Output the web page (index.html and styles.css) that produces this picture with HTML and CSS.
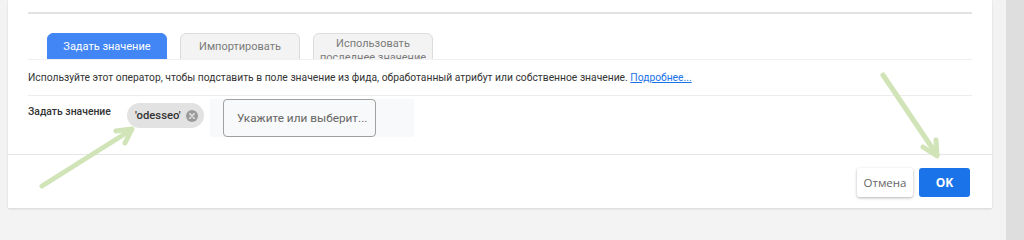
FILE: index.html
```html
<!DOCTYPE html>
<html lang="ru">
<head>
  <meta charset="UTF-8" />
  <meta name="viewport" content="width=device-width, initial-scale=1.0" />
  <title>Задать значение</title>
  <link rel="stylesheet" href="styles.css">
</head>
<body>
  <div class="dialog">
    <div class="dialog-body">
      <div class="top-rule"></div>

      <div class="tabs">
        <div class="tab tab-active">Задать значение</div>
        <div class="tab">Импортировать</div>
        <div class="tab tab-double">Использовать<br>последнее значение</div>
      </div>

      <div class="panel">
        <p class="desc">Используйте этот оператор, чтобы подставить в поле значение из фида, обработанный атрибут или собственное значение.&nbsp;<a href="#" class="more-link">Подробнее...</a></p>

        <div class="field-row">
          <div class="field-label">Задать значение</div>
          <div class="chip">
            <span class="chip-text">'odesseo'</span>
            <span class="chip-remove">
              <svg width="12" height="12" viewBox="0 0 12 12">
                <circle cx="6" cy="6" r="6" fill="#9b9b9b" />
                <path d="M3.8 3.8 L8.2 8.2 M8.2 3.8 L3.8 8.2" stroke="#e4e4e4" stroke-width="1.6" stroke-linecap="round" />
              </svg>
            </span>
          </div>
          <div class="input-wrap">
            <div class="input-box">Укажите или выберит...</div>
          </div>
        </div>
      </div>
    </div>

    <div class="dialog-footer">
      <button class="btn-cancel">Отмена</button>
      <button class="btn-ok">OK</button>
    </div>
  </div>

  <div class="gutter"></div>
  <div class="scrollbar"></div>

  <!-- annotation arrows over the screenshot -->
  <svg class="arrows" width="1024" height="240" viewBox="0 0 1024 240">
    <g stroke="#d0e4b7" stroke-width="5" stroke-linecap="round" stroke-linejoin="round" fill="none">
      <path d="M42 186 L131 130" />
      <path d="M116 131 L132 129 L125 143" />
      <path d="M883 75 L937 155" />
      <path d="M923 147 L937 156 L936 140" />
    </g>
  </svg>
</body>
</html>
```

FILE: styles.css
```css
body {
  margin: 0;
  padding: 0;
  background: #f3f3f3;
  font-family: Roboto, 'Liberation Sans', sans-serif;
  color: #333;
  display: flex;
  height: 240px;
  overflow: hidden;
}

.dialog {
  width: 984px;
  height: 208px;
  margin-left: 8px;
  background: #fff;
  box-shadow: 0 1px 2px rgba(0, 0, 0, 0.12);
  display: flex;
  flex-direction: column;
}

.dialog-body {
  flex: 1;
  padding: 0 20px;
}

.top-rule {
  height: 2px;
  margin-top: 12px;
  background: #e2e2e2;
}

.tabs {
  display: flex;
  gap: 13px;
  padding-left: 19px;
  margin-top: 19px;
  height: 26px;
  overflow: hidden;
}

.tab {
  width: 120px;
  height: 40px;
  box-sizing: border-box;
  padding-top: 6px;
  border: 1px solid #dcdcdc;
  border-radius: 6px 6px 0 0;
  background: #f3f3f3;
  color: #7b7b7b;
  font-size: 11px;
  line-height: 14px;
  text-align: center;
}

.tab-active {
  background: #4285f4;
  border-color: #4285f4;
  color: #fff;
}

.tab-double {
  padding-top: 3px;
}

.panel {
  border-top: 1px solid #f0f0f0;
}

.desc {
  margin: 0;
  height: 35px;
  display: flex;
  align-items: center;
  border-bottom: 1px solid #ececec;
  font-size: 10.3px;
  color: #333;
  white-space: nowrap;
}

.more-link {
  color: #1a73e8;
  text-decoration: underline;
}

.field-row {
  display: flex;
  align-items: flex-start;
  padding-top: 3px;
}

.field-label {
  width: 99px;
  margin-top: 6px;
  font-size: 10.4px;
  line-height: 13px;
  font-weight: 500;
  color: #333;
}

.chip {
  width: 77px;
  height: 25px;
  margin-top: 4px;
  box-sizing: border-box;
  padding: 0 6px 0 8px;
  border-radius: 13px;
  background: #e2e2e2;
  display: flex;
  align-items: center;
  justify-content: space-between;
}

.chip-text {
  font-size: 11.3px;
  font-weight: 500;
  color: #333;
}

.chip-remove {
  display: flex;
}

.input-wrap {
  margin-left: 6px;
  width: 204px;
  height: 38px;
  box-sizing: border-box;
  padding-left: 13px;
  background: #f8f9fa;
}

.input-box {
  width: 153px;
  height: 38px;
  box-sizing: border-box;
  border: 1px solid #a0a0a0;
  border-radius: 4px;
  background: #f8f9fa;
  padding-left: 13px;
  display: flex;
  align-items: center;
  font-size: 11.8px;
  color: #666;
  white-space: nowrap;
}

.dialog-footer {
  height: 54px;
  border-top: 1px solid #e6e6e6;
  display: flex;
  justify-content: flex-end;
  align-items: flex-start;
  gap: 6px;
  padding: 13px 22px 0 0;
  box-sizing: border-box;
}

.btn-cancel {
  width: 56px;
  height: 29px;
  border: none;
  border-radius: 3px;
  background: #fff;
  box-shadow: 0 1px 3px rgba(0, 0, 0, 0.3);
  font-family: 'Open Sans', 'Liberation Sans', sans-serif;
  font-size: 11.5px;
  color: #666;
  padding: 0;
}

.btn-ok {
  width: 51px;
  height: 29px;
  border: none;
  border-radius: 3px;
  background: #1a73e8;
  font-family: 'Open Sans', 'Liberation Sans', sans-serif;
  font-size: 12px;
  font-weight: 700;
  color: #fff;
  padding: 0;
}

.gutter {
  width: 14px;
}

.scrollbar {
  width: 18px;
  height: 240px;
  background: #dedede;
}

.arrows {
  position: absolute;
  left: 0;
  top: 0;
  pointer-events: none;
}
```
